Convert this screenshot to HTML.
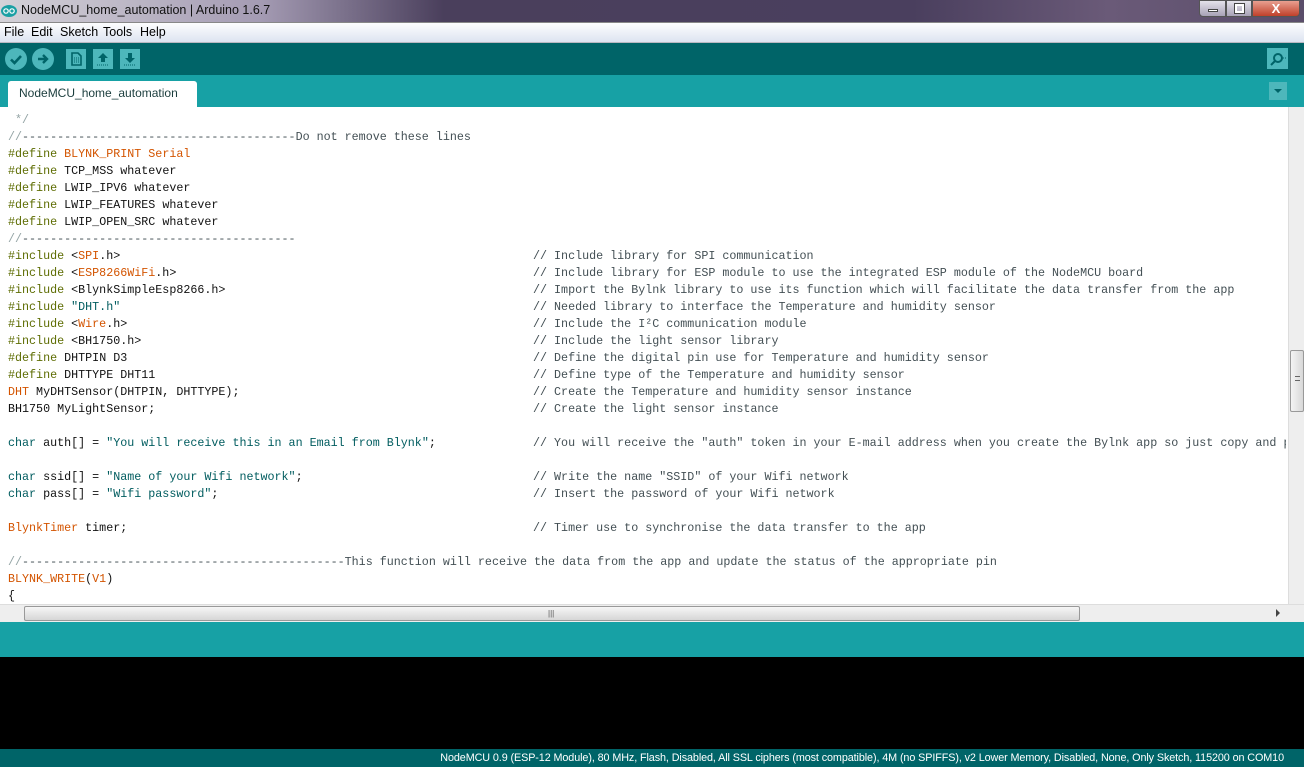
<!DOCTYPE html>
<html><head><meta charset="utf-8"><style>
*{margin:0;padding:0;box-sizing:border-box}
body{width:1304px;height:767px;overflow:hidden;position:relative;background:#fff;font-family:"Liberation Sans",sans-serif}
.abs{position:absolute}
#title{left:0;top:0;width:1304px;height:22px;background:linear-gradient(90deg,#d4d2d8 0%,#a49bb3 20%,#4a3f5c 34%,#4a3f5e 70%,#6a5a78 85%,#5a4d6a 100%)}
#title span{position:absolute;left:21px;top:3px;font-size:12.5px;color:#111}
#menu{left:0;top:22px;width:1304px;height:21px;background:linear-gradient(#fdfdfe,#dde4f1);border-top:1px solid #888;border-bottom:1px solid #b9b9c2;font-size:12.5px}
#menu span{position:absolute;top:2px;color:#000}
#tool{left:0;top:43px;width:1304px;height:32px;background:#006468}
#tabs{left:0;top:75px;width:1304px;height:32px;background:#17a1a5}
#tab{left:8px;top:81px;width:189px;height:26px;background:#fff;border-radius:3px 3px 0 0;font-size:12px;color:#1b3d3d;padding:5px 0 0 11px}
.btn{position:absolute;background:#4db7bb}
#code{left:8px;top:112px;font-family:"Liberation Mono",monospace;font-size:11.7px;color:#111}
.l{height:17px;line-height:17px;white-space:pre;position:relative;width:1278px;overflow:hidden}
.c{position:absolute;left:525px;top:0;color:#434f54}
.k{color:#5e6d03}.o{color:#d35400}.s{color:#005c5f}.g{color:#95a5a6}.cm{color:#434f54}
#vs{left:1288px;top:107px;width:16px;height:497px;background:#eee;border-left:1px solid #ddd}
#hs{left:0;top:604px;width:1304px;height:18px;background:#eee;border-top:1px solid #ddd}
#bot{left:0;top:622px;width:1304px;height:35px;background:#17a1a5}
#con{left:0;top:657px;width:1304px;height:92px;background:#000}
#stat{left:0;top:749px;width:1304px;height:18px;background:#006468;color:#fff;font-size:10.8px;text-align:right;padding:3px 20px 0 0;letter-spacing:-.1px;white-space:nowrap}
</style></head><body>
<div id="title" class="abs">
<svg class="abs" style="left:1px;top:5px" width="16" height="12"><ellipse cx="8" cy="6" rx="8" ry="6" fill="#1aa0a4"/><circle cx="5" cy="6" r="2.2" fill="none" stroke="#fff" stroke-width="1.2"/><circle cx="11" cy="6" r="2.2" fill="none" stroke="#fff" stroke-width="1.2"/></svg>
<span>NodeMCU_home_automation | Arduino 1.6.7</span>
<div class="abs" style="left:1199px;top:0;width:27px;height:17px;border:1px solid #555;border-radius:0 0 0 4px;background:linear-gradient(#e4e2ea,#a8a2b6)"><div class="abs" style="left:8px;top:8px;width:10px;height:3px;background:#fff;border:1px solid #444"></div></div>
<div class="abs" style="left:1226px;top:0;width:26px;height:17px;border:1px solid #555;background:linear-gradient(#e4e2ea,#a8a2b6)"><div class="abs" style="left:8px;top:3px;width:9px;height:9px;border:2px solid #fff;outline:1px solid #444"></div></div>
<div class="abs" style="left:1252px;top:0;width:48px;height:17px;border:1px solid #555;border-radius:0 0 4px 0;background:linear-gradient(#e8a090,#c0402a);color:#fff;font-weight:bold;font-size:13px;text-align:center;line-height:15px">X</div>
</div>
<div id="menu" class="abs"><span style="left:4px">File</span><span style="left:31px">Edit</span><span style="left:60px">Sketch</span><span style="left:103px">Tools</span><span style="left:140px">Help</span></div>
<div id="tool" class="abs">
<div class="btn" style="left:5px;top:5px;width:22px;height:22px;border-radius:50%"></div>
<svg class="abs" style="left:5px;top:5px" width="22" height="22"><path d="M6 11.5l3.5 3.5L16 8" fill="none" stroke="#006468" stroke-width="2.6"/></svg>
<div class="btn" style="left:32px;top:5px;width:22px;height:22px;border-radius:50%"></div>
<svg class="abs" style="left:32px;top:5px" width="22" height="22"><path d="M6 11h8M11 7l4 4-4 4" fill="none" stroke="#006468" stroke-width="2.4"/></svg>
<div class="btn" style="left:66px;top:6px;width:20px;height:20px"></div>
<svg class="abs" style="left:66px;top:6px" width="20" height="20"><path d="M6 4h6l3 3v9H6z" fill="none" stroke="#006468" stroke-width="1.6"/><path d="M8 9h5M8 11h5M8 13h5" stroke="#006468" stroke-width="1" stroke-dasharray="1 1"/></svg>
<div class="btn" style="left:93px;top:6px;width:20px;height:20px"></div>
<svg class="abs" style="left:93px;top:6px" width="20" height="20"><path d="M10 4l-5 5h3v4h4V9h3z" fill="#006468"/><path d="M4 16h12" stroke="#006468" stroke-dasharray="1 1"/></svg>
<div class="btn" style="left:120px;top:6px;width:20px;height:20px"></div>
<svg class="abs" style="left:120px;top:6px" width="20" height="20"><path d="M10 14l-5-5h3V4h4v5h3z" fill="#006468"/><path d="M4 16h12" stroke="#006468" stroke-dasharray="1 1"/></svg>
<div class="btn" style="left:1267px;top:5px;width:21px;height:21px"></div>
<svg class="abs" style="left:1267px;top:5px" width="21" height="21"><circle cx="11" cy="10" r="4" fill="none" stroke="#006468" stroke-width="2"/><path d="M8 13l-4 4" stroke="#006468" stroke-width="2"/><path d="M16 10h3" stroke="#006468" stroke-dasharray="1 1"/></svg>
</div>
<div id="tabs" class="abs"><div class="abs" style="left:1269px;top:7px;width:18px;height:18px;background:#4db7bb"><svg width="18" height="18"><path d="M5 7h8l-4 4z" fill="#006468"/></svg></div></div>
<div id="tab" class="abs">NodeMCU_home_automation</div>
<div id="code" class="abs">
<div class="l"><span class="g"> */</span></div>
<div class="l"><span class="g">//</span><span class="cm">---------------------------------------Do not remove these lines</span></div>
<div class="l"><span class="k">#define</span> <span class="o">BLYNK_PRINT Serial</span></div>
<div class="l"><span class="k">#define</span> TCP_MSS whatever</div>
<div class="l"><span class="k">#define</span> LWIP_IPV6 whatever</div>
<div class="l"><span class="k">#define</span> LWIP_FEATURES whatever</div>
<div class="l"><span class="k">#define</span> LWIP_OPEN_SRC whatever</div>
<div class="l"><span class="g">//</span><span class="cm">---------------------------------------</span></div>
<div class="l"><span class="k">#include</span> &lt;<span class="o">SPI</span>.h&gt;<span class="c">// Include library for SPI communication</span></div>
<div class="l"><span class="k">#include</span> &lt;<span class="o">ESP8266WiFi</span>.h&gt;<span class="c">// Include library for ESP module to use the integrated ESP module of the NodeMCU board</span></div>
<div class="l"><span class="k">#include</span> &lt;BlynkSimpleEsp8266.h&gt;<span class="c">// Import the Bylnk library to use its function which will facilitate the data transfer from the app</span></div>
<div class="l"><span class="k">#include</span> <span class="s">"DHT.h"</span><span class="c">// Needed library to interface the Temperature and humidity sensor</span></div>
<div class="l"><span class="k">#include</span> &lt;<span class="o">Wire</span>.h&gt;<span class="c">// Include the I²C communication module</span></div>
<div class="l"><span class="k">#include</span> &lt;BH1750.h&gt;<span class="c">// Include the light sensor library</span></div>
<div class="l"><span class="k">#define</span> DHTPIN D3<span class="c">// Define the digital pin use for Temperature and humidity sensor</span></div>
<div class="l"><span class="k">#define</span> DHTTYPE DHT11<span class="c">// Define type of the Temperature and humidity sensor</span></div>
<div class="l"><span class="o">DHT</span> MyDHTSensor(DHTPIN, DHTTYPE);<span class="c">// Create the Temperature and humidity sensor instance</span></div>
<div class="l">BH1750 MyLightSensor;<span class="c">// Create the light sensor instance</span></div>
<div class="l"> </div>
<div class="l"><span class="s">char</span> auth[] = <span class="s">"You will receive this in an Email from Blynk"</span>;<span class="c">// You will receive the "auth" token in your E-mail address when you create the Bylnk app so just copy and paste it here</span></div>
<div class="l"> </div>
<div class="l"><span class="s">char</span> ssid[] = <span class="s">"Name of your Wifi network"</span>;<span class="c">// Write the name "SSID" of your Wifi network</span></div>
<div class="l"><span class="s">char</span> pass[] = <span class="s">"Wifi password"</span>;<span class="c">// Insert the password of your Wifi network</span></div>
<div class="l"> </div>
<div class="l"><span class="o">BlynkTimer</span> timer;<span class="c">// Timer use to synchronise the data transfer to the app</span></div>
<div class="l"> </div>
<div class="l"><span class="g">//</span><span class="cm">----------------------------------------------This function will receive the data from the app and update the status of the appropriate pin</span></div>
<div class="l"><span class="o">BLYNK_WRITE</span>(<span class="o">V1</span>)</div>
<div class="l">{</div>
</div>
<div id="vs" class="abs"><div class="abs" style="left:1px;top:243px;width:14px;height:62px;background:linear-gradient(90deg,#f4f4f4,#d8d8d8);border:1px solid #999;border-radius:2px"><div style="margin:25px 0 0 4px;width:5px;border-top:1px solid #666;height:5px;border-bottom:1px solid #666"></div></div></div>
<div id="hs" class="abs"><div class="abs" style="left:24px;top:1px;width:1056px;height:15px;background:linear-gradient(#f6f6f6,#d6d6d6);border:1px solid #999;border-radius:2px"></div><div class="abs" style="left:548px;top:4px;font-size:8px;color:#555">|||</div><div class="abs" style="left:1276px;top:4px;width:0;height:0;border-left:4px solid #444;border-top:4px solid transparent;border-bottom:4px solid transparent"></div></div>
<div id="bot" class="abs"></div>
<div id="con" class="abs"></div>
<div id="stat" class="abs">NodeMCU 0.9 (ESP-12 Module), 80 MHz, Flash, Disabled, All SSL ciphers (most compatible), 4M (no SPIFFS), v2 Lower Memory, Disabled, None, Only Sketch, 115200 on COM10</div>
</body></html>
